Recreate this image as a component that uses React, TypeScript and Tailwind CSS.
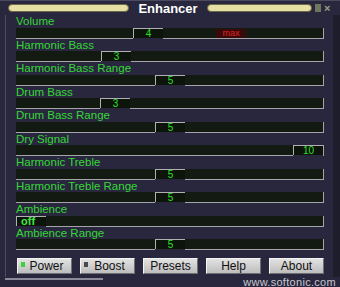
type Row = {
  label: string;
  value: string;
  left: string;
  wide?: boolean;
  extra?: boolean;
};

const rows: Row[] = [
  { label: "Volume", value: "4", left: "w-[117px]", extra: true },
  { label: "Harmonic Bass", value: "3", left: "w-[85px]" },
  { label: "Harmonic Bass Range", value: "5", left: "w-[139px]" },
  { label: "Drum Bass", value: "3", left: "w-[84px]" },
  { label: "Drum Bass Range", value: "5", left: "w-[139px]" },
  { label: "Dry Signal", value: "10", left: "w-[277px]" },
  { label: "Harmonic Treble", value: "5", left: "w-[139px]" },
  { label: "Harmonic Treble Range", value: "5", left: "w-[139px]" },
  { label: "Ambience", value: "off", left: "w-0", wide: true },
  { label: "Ambience Range", value: "5", left: "w-[139px]" },
];

const Slider = ({ row }: { row: Row }) => (
  <div className="flex flex-col">
    <div className="h-[12.5px] text-[11.5px] leading-[12px] text-[#36d636]">
      {row.label}
    </div>
    <div className="flex h-[11px]">
      <div
        className={`${row.left} shrink-0 bg-[#131a11] border-b border-[#a4a4aa] ${row.left === "w-0" ? "border-0" : ""}`}
      />
      <div
        className={`w-[30px] shrink-0 h-[10px] bg-[#0d150b] border-t border-l border-[#b0b0b4] flex items-center justify-center ${
          row.wide
            ? "text-[11px] font-bold text-[#44e844] justify-start pl-[4px]"
            : "text-[10px] text-[#2ee02e] pt-[1px]"
        } leading-none`}
      >
        {row.value}
      </div>
      <div className="flex-1 bg-[#131a11] border-b border-r border-[#a4a4aa] flex items-start">
        {row.extra && (
          <div className="ml-[53px] mt-[1px] w-[30px] h-[9px] bg-[#3a0a0a] text-[#e02424] text-[9px] leading-[9px] flex items-center justify-center">
            max
          </div>
        )}
      </div>
    </div>
  </div>
);

const Btn = ({ label, led }: { label: string; led?: string }) => (
  <div className="relative w-[55px] h-[16px] bg-gradient-to-b from-[#e2e2e2] to-[#bdbdbd] border-t border-l border-[#f4f4f4] border-r border-b border-r-[#6e6e74] border-b-[#6e6e74] flex items-center justify-center text-[12px] text-[#111] leading-none">
    {led && (
      <span className={`absolute left-[3px] top-[3px] w-[4px] h-[5px] ${led}`} />
    )}
    <span className={led ? "pl-[4px]" : ""}>{label}</span>
  </div>
);

export default function App() {
  return (
    <div
      className="w-[340px] h-[287px] bg-[#28273d] overflow-hidden flex flex-col"
      style={{ fontFamily: '"Liberation Sans", Arial, sans-serif' }}
    >
      {/* title bar */}
      <div className="h-[15px] flex items-center pl-[8px] pr-[6px] border-t border-[#4a4960]">
        <div className="w-[121px] h-[8px] rounded-full bg-[#e6e0a4] border border-[#6c6a48]" />
        <div className="w-[78px] text-center text-white font-bold text-[13px] leading-none">
          Enhancer
        </div>
        <div className="w-[105px] h-[8px] rounded-full bg-[#e6e0a4] border border-[#6c6a48]" />
        <div className="ml-[3px] w-[6px] h-[8px] bg-[#6f7660]" />
        <div className="ml-[3px] text-[11px] font-bold leading-none text-[#9aa088]">×</div>
      </div>

      <div className="flex flex-1">
        <div className="w-[6px] border-r border-[#4c4b62]" />
        <div className="flex-1 flex flex-col pl-[10px] pr-[9px]">
          <div className="flex flex-col">
            {rows.map((r) => (
              <Slider key={r.label} row={r} />
            ))}
          </div>
          <div className="flex gap-[8px] mt-[8px] pl-[1px]">
            <Btn label="Power" led="bg-[#3cd23c]" />
            <Btn label="Boost" led="bg-[#4a4a4a]" />
            <Btn label="Presets" />
            <Btn label="Help" />
            <Btn label="About" />
          </div>
        </div>
        <div className="w-[7px] bg-[#1e1d2c]" />
      </div>

      <div className="h-[10px] flex items-start">
        <div className="ml-[5px] w-[98px] h-[2px] bg-[#8a8a98] mt-[1px]" />
        <div className="ml-auto mr-[4px] text-[11px] leading-[10px] text-[#c8c8d0] tracking-[0.3px]">
          www.softonic.com
        </div>
      </div>
    </div>
  );
}
